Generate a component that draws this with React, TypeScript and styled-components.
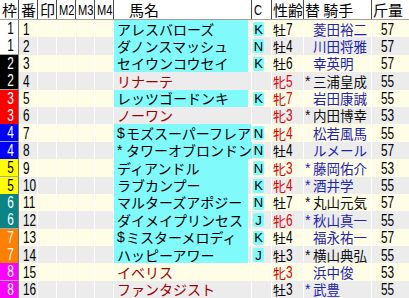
import styled, { createGlobalStyle } from 'styled-components';

const GlobalStyle = createGlobalStyle`
  body {
    margin: 0;
    background: #fff;
    font-family: "Liberation Sans", "Noto Sans CJK JP", sans-serif;
  }
`;

const COLS = '19px 19px 19px 19px 19px 19px 138px 20px 32px 68px 37px';

const WAKU: Record<number, [string, string]> = {
  1: ['#ffffff', '#000'],
  2: ['#000000', '#fff'],
  3: ['#ff0000', '#fff'],
  4: ['#0000ff', '#fff'],
  5: ['#ffff00', '#000'],
  6: ['#0a8484', '#fff'],
  7: ['#ff8000', '#fff'],
  8: ['#ff00ff', '#fff'],
};

type Horse = {
  waku: number;
  num: number;
  name: string;
  mark?: string;
  cyan: boolean;
  c?: string;
  sex: '牡' | '牝';
  age: number;
  jockey: string;
  star: boolean;
  dark?: boolean;
  weight: number;
};

const horses: Horse[] = [
  { waku: 1, num: 1, name: 'アレスバローズ', cyan: true, c: 'K', sex: '牡', age: 7, jockey: '菱田裕二', star: false, weight: 57 },
  { waku: 1, num: 2, name: 'ダノンスマッシュ', cyan: true, c: 'N', sex: '牡', age: 4, jockey: '川田将雅', star: false, weight: 57 },
  { waku: 2, num: 3, name: 'セイウンコウセイ', cyan: true, c: 'K', sex: '牡', age: 6, jockey: '幸英明', star: false, weight: 57 },
  { waku: 2, num: 4, name: 'リナーテ', cyan: false, sex: '牝', age: 5, jockey: '三浦皇成', star: true, dark: true, weight: 55 },
  { waku: 3, num: 5, name: 'レッツゴードンキ', cyan: true, c: 'K', sex: '牝', age: 7, jockey: '岩田康誠', star: false, weight: 55 },
  { waku: 3, num: 6, name: 'ノーワン', cyan: false, sex: '牝', age: 3, jockey: '内田博幸', star: true, dark: true, weight: 53 },
  { waku: 4, num: 7, name: 'モズスーパーフレア', mark: '$', cyan: true, c: 'N', sex: '牝', age: 4, jockey: '松若風馬', star: false, weight: 55 },
  { waku: 4, num: 8, name: 'タワーオブロンドン', mark: '*', cyan: true, c: 'N', sex: '牡', age: 4, jockey: 'ルメール', star: false, weight: 57 },
  { waku: 5, num: 9, name: 'ディアンドル', cyan: true, c: 'N', sex: '牝', age: 3, jockey: '藤岡佑介', star: true, weight: 53 },
  { waku: 5, num: 10, name: 'ラブカンプー', cyan: true, c: 'K', sex: '牝', age: 4, jockey: '酒井学', star: true, weight: 55 },
  { waku: 6, num: 11, name: 'マルターズアポジー', cyan: true, c: 'N', sex: '牡', age: 7, jockey: '丸山元気', star: true, dark: true, weight: 57 },
  { waku: 6, num: 12, name: 'ダイメイプリンセス', cyan: true, c: 'J', sex: '牝', age: 6, jockey: '秋山真一', star: true, weight: 55 },
  { waku: 7, num: 13, name: 'ミスターメロディ', mark: '$', cyan: true, c: 'K', sex: '牡', age: 4, jockey: '福永祐一', star: false, weight: 57 },
  { waku: 7, num: 14, name: 'ハッピーアワー', cyan: true, c: 'J', sex: '牡', age: 3, jockey: '横山典弘', star: true, dark: true, weight: 55 },
  { waku: 8, num: 15, name: 'イベリス', cyan: false, sex: '牝', age: 3, jockey: '浜中俊', star: false, weight: 53 },
  { waku: 8, num: 16, name: 'ファンタジスト', cyan: false, sex: '牡', age: 3, jockey: '武豊', star: true, weight: 55 },
];

const Table = styled.div`
  display: flex;
  flex-direction: column;
  width: 409px;
`;

const HeaderRow = styled.div`
  display: grid;
  grid-template-columns: ${COLS};
  height: 20px;
  border-bottom: 1px solid #a0a0a0;
  box-sizing: border-box;
  background: #fff;
`;

const HeadCell = styled.div<{ $pad?: number; $last?: boolean }>`
  display: flex;
  align-items: center;
  padding-left: ${(p) => p.$pad ?? 1}px;
  border-right: ${(p) => (p.$last ? 'none' : '1px solid #4a4a4a')};
  font-family: "Noto Sans CJK JP", sans-serif;
  font-size: 15px;
  line-height: 19px;
  color: #000;
  white-space: pre;
`;

// narrow latin text, like the bitmap UI font of the original
const Narrow = styled.span<{ $origin?: string }>`
  display: inline-block;
  font-family: "Liberation Sans", sans-serif;
  transform: scaleX(0.74);
  transform-origin: ${(p) => p.$origin ?? 'left'} center;
`;

const Row = styled.div<{ $odd: boolean }>`
  display: grid;
  grid-template-columns: ${COLS};
  height: 17.4px;
  background: ${(p) => (p.$odd ? '#fffde6' : '#ececec')};
`;

const Cell = styled.div`
  display: flex;
  align-items: center;
  border-right: 1px solid #fff;
  white-space: pre;
  font-size: 16px;
  line-height: 17px;
  color: #000;
`;

const WakuCell = styled(Cell)<{ $bg: string; $fg: string }>`
  justify-content: flex-end;
  padding-right: 4px;
  background: ${(p) => p.$bg};
  color: ${(p) => p.$fg};
  border-right: 1px solid #7a7a7a;
  border-bottom: 1px solid #a8a8a8;
`;

const NumCell = styled(Cell)`
  padding-left: 4px;
`;

const NameCell = styled(Cell)`
  padding-right: 3px;
`;

const NameFill = styled.div<{ $cyan: boolean }>`
  flex: 1;
  align-self: stretch;
  display: flex;
  align-items: center;
  padding-left: 3px;
  background: ${(p) => (p.$cyan ? '#80fafa' : 'transparent')};
  color: ${(p) => (p.$cyan ? '#000' : '#9c0000')};
  font-family: "Noto Sans CJK JP", sans-serif;
  font-size: 14px;
`;

const Mark = styled.span`
  display: inline-block;
  width: 9px;
  color: #000;
  font-family: "Liberation Sans", sans-serif;
  font-size: 14px;
`;

const CCell = styled(Cell)`
  padding-left: 1px;
`;

const CBox = styled.span`
  display: inline-flex;
  align-items: center;
  justify-content: center;
  width: 11px;
  height: 14px;
  border-radius: 2px;
  background: #80fafa;
  font-family: "Liberation Sans", sans-serif;
  font-size: 13px;
`;

const SexCell = styled(Cell)<{ $mare: boolean }>`
  padding-left: 1px;
  color: ${(p) => (p.$mare ? '#e00000' : '#000')};
`;

const SexKanji = styled.span`
  font-family: "Noto Sans CJK JP", sans-serif;
  font-size: 13px;
`;

const JockeyCell = styled(Cell)<{ $dark: boolean }>`
  padding-left: 1px;
  color: ${(p) => (p.$dark ? '#111' : '#1c24b0')};
`;

const Star = styled.span`
  display: inline-block;
  width: 8px;
  font-family: "Liberation Sans", sans-serif;
  font-size: 14px;
`;

const JockeyName = styled.span`
  font-family: "Noto Sans CJK JP", sans-serif;
  font-size: 13.5px;
`;

const WeightCell = styled(Cell)`
  padding-left: 9px;
  border-right: none;
`;

export default function App() {
  return (
    <>
      <GlobalStyle />
      <Table>
        <HeaderRow>
          <HeadCell $pad={2}>枠</HeadCell>
          <HeadCell $pad={2}>番</HeadCell>
          <HeadCell $pad={2}>印</HeadCell>
          <HeadCell $pad={2}><Narrow>M2</Narrow></HeadCell>
          <HeadCell $pad={2}><Narrow>M3</Narrow></HeadCell>
          <HeadCell $pad={2}><Narrow>M4</Narrow></HeadCell>
          <HeadCell $pad={15}>馬名</HeadCell>
          <HeadCell $pad={2}><Narrow>C</Narrow></HeadCell>
          <HeadCell $pad={1}>性齢</HeadCell>
          <HeadCell $pad={1}>替 騎手</HeadCell>
          <HeadCell $pad={1} $last>斤量</HeadCell>
        </HeaderRow>
        {horses.map((h, i) => {
          const [bg, fg] = WAKU[h.waku];
          return (
            <Row key={h.num} $odd={i % 2 === 0}>
              <WakuCell $bg={bg} $fg={fg}>
                <Narrow $origin="right">{h.waku}</Narrow>
              </WakuCell>
              <NumCell>
                <Narrow>{h.num}</Narrow>
              </NumCell>
              <Cell />
              <Cell />
              <Cell />
              <Cell />
              <NameCell>
                <NameFill $cyan={h.cyan}>
                  {h.mark && <Mark>{h.mark}</Mark>}
                  {h.name}
                </NameFill>
              </NameCell>
              <CCell>{h.c && <CBox>{h.c}</CBox>}</CCell>
              <SexCell $mare={h.sex === '牝'}>
                <SexKanji>{h.sex}</SexKanji>
                <Narrow>{h.age}</Narrow>
              </SexCell>
              <JockeyCell $dark={!!h.dark}>
                <Star>{h.star ? '*' : ' '}</Star>
                <JockeyName>{h.jockey}</JockeyName>
              </JockeyCell>
              <WeightCell>
                <Narrow>{h.weight}</Narrow>
              </WeightCell>
            </Row>
          );
        })}
      </Table>
    </>
  );
}
